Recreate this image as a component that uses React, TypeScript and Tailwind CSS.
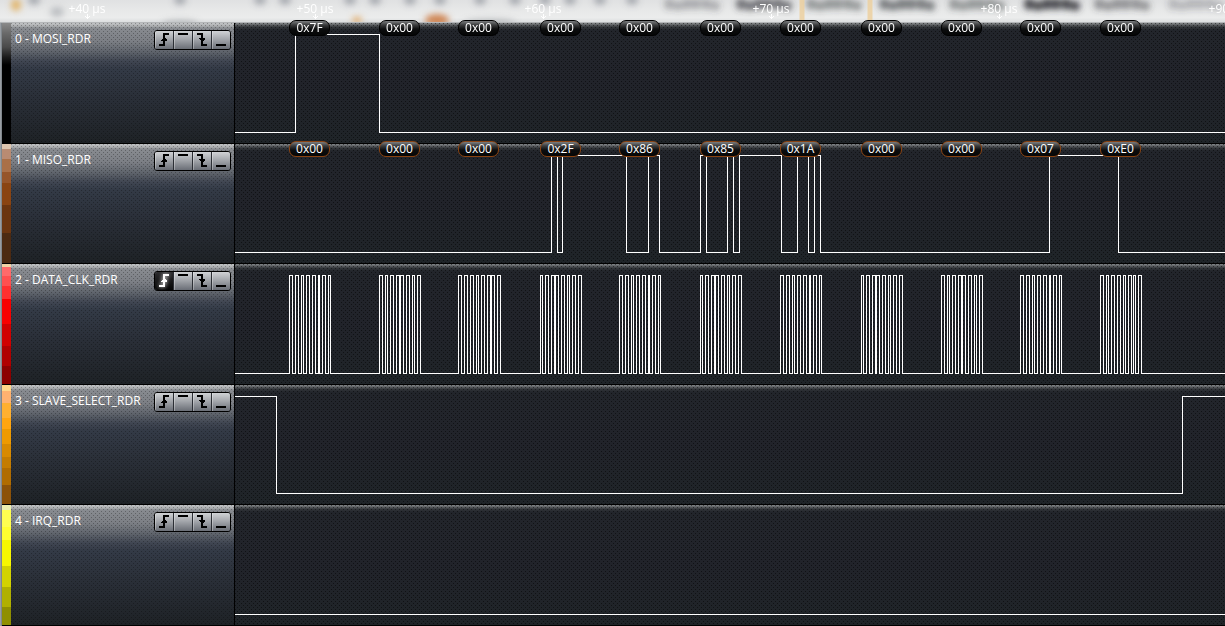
import { useState } from 'react';

type Trigger = 'rising' | 'high' | 'falling' | 'low';

type Channel = {
  name: string;
  strip: string;
  low: number;
  pill?: string;
  startHigh?: boolean;
  edges: number[];
  bytes?: string[];
};

// x of every byte on the bus, measured from the left of the lane
const BYTE_X = [54, 144, 223, 305, 384, 465, 545, 626, 706, 785, 865];

// sampled clock edges inside a byte, relative to BYTE_X
const CLOCK = [
  [0, 3, 6, 9, 12, 14, 17, 20, 23, 26, 29, 30, 33, 36, 39, 41],
  [0, 3, 6, 8, 11, 14, 17, 20, 21, 24, 27, 30, 33, 35, 38, 41],
  [0, 3, 6, 9, 12, 15, 18, 20, 23, 26, 29, 32, 33, 36, 39, 42],
  [0, 2, 5, 8, 11, 14, 15, 18, 21, 24, 27, 29, 32, 35, 38, 41],
  [0, 3, 6, 8, 11, 14, 17, 20, 23, 25, 28, 31, 33, 35, 38, 41],
];
const CLOCK_PATTERN = [0, 1, 2, 3, 0, 3, 0, 3, 1, 0, 4];

const channels: Channel[] = [
  {
    name: '0 - MOSI_RDR',
    strip: 'bg-[linear-gradient(#8a8a8a,#6a6a6a_10px,#4a4a4a_24px,#1c1c1c_34px,#000_42px)]',
    low: 109,
    pill: 'border-black',
    edges: [60, 144],
    bytes: ['0x7F', '0x00', '0x00', '0x00', '0x00', '0x00', '0x00', '0x00', '0x00', '0x00', '0x00'],
  },
  {
    name: '1 - MISO_RDR',
    strip:
      'bg-[linear-gradient(#dcc4ae_5px,#b98b72_0_15px,#aa7048_0_28px,#96552a_0_39px,#8a4412_0_61px,#6b3510_0_89px,#4c2a12_0)]',
    low: 108,
    pill: 'border-[#8b4311]',
    edges: [316, 322, 327, 391, 413, 424, 465, 471, 492, 498, 504, 546, 562, 573, 579, 585, 814, 883],
    bytes: ['0x00', '0x00', '0x00', '0x2F', '0x86', '0x85', '0x1A', '0x00', '0x00', '0x07', '0xE0'],
  },
  {
    name: '2 - DATA_CLK_RDR',
    strip:
      'bg-[linear-gradient(#f0d2a4_3px,#ff6a6a_0_12px,#ff5050_0_22px,#ff3030_0_35px,#f80000_0_60px,#d00000_0_82px,#b00000_0_102px,#8c0000_0)]',
    low: 109,
    edges: BYTE_X.flatMap((x, i) => CLOCK[CLOCK_PATTERN[i]].map((e) => x + e)),
  },
  {
    name: '3 - SLAVE_SELECT_RDR',
    strip:
      'bg-[linear-gradient(#ffd78a_6px,#ffb270_0_18px,#ffb030_0_33px,#ffa510_0_44px,#ee9a00_0_59px,#d88a00_0_72px,#c47c00_0_83px,#b06c00_0_100px,#8c5208_0)]',
    low: 108,
    startHigh: true,
    edges: [41, 947],
  },
  {
    name: '4 - IRQ_RDR',
    strip:
      'bg-[linear-gradient(#eef0b0_5px,#ffff50_0_22px,#ffff30_0_35px,#f7f700_0_61px,#d2d200_0_82px,#b0b000_0_102px,#8f8f00_0)]',
    low: 109,
    edges: [],
  },
];

const HIGH = 11;

function wavePath({ edges, low, startHigh }: Channel) {
  let level = startHigh ? HIGH : low;
  let d = `M-1 ${level}`;
  edges.forEach((x) => {
    level = level === HIGH ? low : HIGH;
    d += `H${x}V${level}`;
  });
  return d + 'H6000';
}

const triggers: { id: Trigger; label: string; d: string }[] = [
  { id: 'rising', label: 'Trigger on rising edge', d: 'M4 13H8V10H6V9L8 7V2H14V4H10V7L12 9V10H10V15H4Z' },
  { id: 'high', label: 'Trigger while high', d: 'M4 2H14V4H4Z' },
  { id: 'falling', label: 'Trigger on falling edge', d: 'M4 2H10V7H12V8L10 10V13H14V15H8V10L6 8V7H8V4H4Z' },
  { id: 'low', label: 'Trigger while low', d: 'M4 13H14V15H4Z' },
];

function TriggerButtons({ channel, value, onChange }: { channel: string; value: Trigger | null; onChange: (t: Trigger) => void }) {
  return (
    <div role="group" aria-label={`${channel} trigger`} className="flex shrink-0 overflow-hidden rounded-[3px] border border-black">
      {triggers.map((t) => {
        const on = value === t.id;
        return (
          <button
            key={t.id}
            type="button"
            aria-label={t.label}
            aria-pressed={on}
            onClick={() => onChange(t.id)}
            className={`h-[18px] w-[19px] border-r border-[#2c2f35] last:w-[18px] last:border-r-0 ${
              on
                ? 'bg-[linear-gradient(#2c2c2e,#050505)] text-white'
                : 'bg-[linear-gradient(#d0d2d5,#a4a7ac_45%,#6a6e76)] text-black shadow-[inset_1px_0_#ffffff50]'
            }`}
          >
            <svg width="18" height="18" viewBox="0 0 18 18" shapeRendering="crispEdges" className={on ? 'drop-shadow-[0_0_2px_#ffffff]' : ''}>
              <path d={t.d} fill="currentColor" />
            </svg>
          </button>
        );
      })}
    </div>
  );
}

// soft shapes seen through the glass title area
function GlassBackdrop() {
  const words = [
    [664, 0.34],
    [736, 0.7],
    [806, 0.48],
    [879, 0.65],
    [949, 0.48],
    [1024, 0.95],
    [1094, 0.5],
    [1168, 0.28],
  ];
  const blobs = [
    [5, 4, 6],
    [14, 6, 5],
    [23, 4, 6],
    [32, 4, 6],
    [42, 4, 6],
    [51, 6, 5],
  ];
  const spots = [34, 180, 260, 285, 350, 375, 410, 440, 480, 515, 545, 570, 600, 632];
  return (
    <svg className="absolute inset-0 h-full w-full" aria-hidden="true">
      <defs>
        <filter id="soft" x="-20%" y="-100%" width="140%" height="300%">
          <feGaussianBlur stdDeviation="3" />
        </filter>
      </defs>
      <g filter="url(#soft)">
        {spots.map((x) => (
          <ellipse key={x} cx={x} cy="0" rx="6" ry="5" fill="#6d7480" opacity="0.5" />
        ))}
        {words.map(([x, o]) => (
          <g key={x} fill="#3c3e42" opacity={o}>
            {blobs.map(([bx, by, r]) => (
              <ellipse key={bx} cx={x + bx} cy={by} rx="5" ry={r} />
            ))}
          </g>
        ))}
        <ellipse cx="16" cy="5" rx="5" ry="6" fill="#e2b56c" />
        <ellipse cx="57" cy="12" rx="7" ry="5" fill="#a8abb0" opacity="0.7" />
        <ellipse cx="180" cy="23" rx="18" ry="3" fill="#8a8d92" opacity="0.5" />
        <ellipse cx="357" cy="20" rx="5" ry="3" fill="#e0a45c" />
        <ellipse cx="437" cy="20" rx="12" ry="6" fill="#cf8654" />
        <ellipse cx="490" cy="22" rx="26" ry="3" fill="#8a8d92" opacity="0.5" />
      </g>
      <path d="M802 0V22M870 0V22" stroke="#edcf9c" strokeWidth="5" opacity="0.8" />
    </svg>
  );
}

function Ruler() {
  return (
    <header className="relative h-[23px] shrink-0 overflow-hidden border-b border-[#b4b6b8] bg-[linear-gradient(#e0e1e2,#e8e9e9_50%,#ebecec_80%,#dcdedf)]">
      <GlassBackdrop />
      <ol className="relative -ml-[27px] flex">
        {['+40 µs', '+50 µs', '+60 µs', '+70 µs', '+80 µs', '+90 µs'].map((t) => (
          <li key={t} className="flex w-[228px] shrink-0 flex-col items-center pt-[4px] text-[12px] leading-[10px] text-white">
            {t}
            <svg width="5" height="5" viewBox="0 0 5 5" shapeRendering="crispEdges" aria-hidden="true">
              <path d="M2 0H3V5H2ZM0 2H1V3H0ZM1 3H4V4H1ZM4 2H5V3H4Z" fill="#fff" />
            </svg>
          </li>
        ))}
      </ol>
    </header>
  );
}

function Lane({ channel }: { channel: Channel }) {
  return (
    <div className="relative min-w-0 flex-1 [background-image:conic-gradient(at_1px_1px,transparent_75%,#00000080_0),conic-gradient(at_1px_1px,transparent_75%,#00000080_0),linear-gradient(#85888a,#5c5f62_2px,#34373b_4px,#22252b_7px,#21232a_50%,#1f2428)] [background-position:0_0,2px_2px,0_0] [background-size:4px_4px,4px_4px,100%_100%]">
      <svg className="absolute inset-0 h-full w-full overflow-visible" shapeRendering="crispEdges" aria-hidden="true">
        <path d={wavePath(channel)} transform="translate(0.5 0.5)" fill="none" stroke="#fff" />
      </svg>
      {channel.bytes?.map((b, i) => (
        <span
          key={i}
          className={`absolute -top-[3px] h-[16px] w-[41px] rounded-[7px] border bg-[linear-gradient(#7c7e80,#3a3b3c_4px,#0c0d0e_8px,#050606)] text-center text-[12px] leading-[14px] text-white ${channel.pill}`}
          style={{ left: BYTE_X[i] }}
        >
          {b}
        </span>
      ))}
    </div>
  );
}

export default function App() {
  const [active, setActive] = useState<{ channel: number; trigger: Trigger } | null>({ channel: 2, trigger: 'rising' });

  return (
    <main className="flex h-screen flex-col overflow-hidden bg-black font-['Open_Sans','Noto_Sans',sans-serif]">
      <Ruler />
      {channels.map((c, i) => (
        <section key={c.name} className="flex flex-1">
          <div className="w-[2px] bg-[linear-gradient(90deg,#a4a9ae,#747a80)]" />
          <div className="flex min-w-0 flex-1 border-b border-black">
            <div className={`w-[9px] ${c.strip}`} />
            <div className="flex w-[224px] shrink-0 items-start justify-between border-r border-black pt-[7px] pr-[3px] pl-1 [background-image:conic-gradient(at_1px_1px,transparent_75%,#00000048_0),conic-gradient(at_1px_1px,transparent_75%,#00000048_0),linear-gradient(#c2c4c6,#acaeb0_3px,#888b90_5px,#7c7f85_18px,#5e636b_29px,#404652_38px,#333a46_46px,#2a2f38_75px,#1e2226)] [background-position:0_0,2px_2px,0_0] [background-size:4px_4px,4px_4px,100%_100%]">
              <h2 className="text-[12px] leading-[18px] whitespace-nowrap text-white">{c.name}</h2>
              <TriggerButtons
                channel={c.name}
                value={active?.channel === i ? active.trigger : null}
                onChange={(trigger) => setActive({ channel: i, trigger })}
              />
            </div>
            <Lane channel={c} />
          </div>
        </section>
      ))}
    </main>
  );
}
